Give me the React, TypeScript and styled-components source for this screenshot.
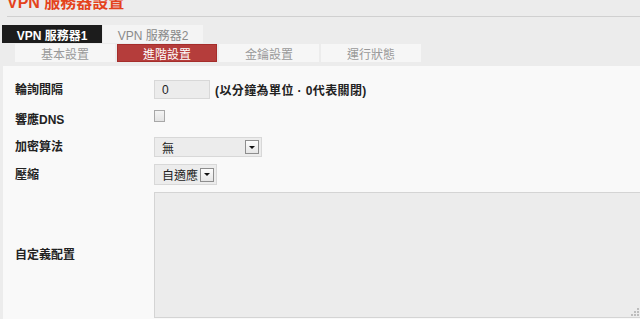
import styled, { createGlobalStyle } from "styled-components";

const GlobalStyle = createGlobalStyle`
  html, body {
    margin: 0;
    padding: 0;
    background: #ececec;
    overflow: hidden;
  }
  body {
    font-family: "Liberation Sans", "Noto Sans CJK TC", sans-serif;
    font-size: 12px;
    color: #222;
  }
`;

const Page = styled.div`
  width: 640px;
  height: 319px;
  overflow: hidden;
`;

const Header = styled.div`
  margin-left: 7px;
  height: 16px;
  border-bottom: 1px solid #d0d0d0;
  overflow: hidden;
`;

const Title = styled.h1`
  margin: -5px 0 0 0;
  font-size: 16px;
  line-height: 16px;
  font-weight: bold;
  color: #e4431c;
`;

const ServerTabs = styled.div`
  display: flex;
  margin: 8px 0 0 2px;
  gap: 1px;
`;

const ServerTab = styled.div<{ $active?: boolean }>`
  width: 100px;
  height: 18px;
  display: flex;
  align-items: center;
  justify-content: center;
  font-size: 12px;
  font-weight: ${(p) => (p.$active ? "bold" : "normal")};
  color: ${(p) => (p.$active ? "#fff" : "#8a8a8a")};
  background: ${(p) => (p.$active ? "#1c1c1c" : "#f4f4f4")};
`;

const SubTabs = styled.div`
  display: flex;
  margin: 1px 0 0 15px;
  gap: 2px;
`;

const SubTab = styled.div<{ $active?: boolean }>`
  box-sizing: border-box;
  width: 100px;
  height: 18px;
  display: flex;
  align-items: center;
  justify-content: center;
  font-size: 12px;
  color: ${(p) => (p.$active ? "#fff" : "#999")};
  background: ${(p) => (p.$active ? "#b53d3b" : "#f6f6f6")};
  border: 1px solid ${(p) => (p.$active ? "#a52d2b" : "#f6f6f6")};
`;

const Panel = styled.div`
  margin: 4px 0 0 3px;
  background: #f9f9f9;
  padding-top: 14px;
  height: 240px;
`;

const Row = styled.div<{ $top?: number; $align?: string; $h?: number }>`
  display: flex;
  align-items: ${(p) => p.$align || "center"};
  margin-top: ${(p) => p.$top || 0}px;
  height: ${(p) => (p.$h ? `${p.$h}px` : "auto")};
`;

const Label = styled.div<{ $pad?: number }>`
  flex-shrink: 0;
  width: 139px;
  padding-left: 12px;
  padding-top: ${(p) => p.$pad || 0}px;
  font-weight: bold;
  font-size: 12px;
  line-height: 16px;
  color: #222;
`;

const TextInput = styled.div`
  box-sizing: border-box;
  width: 56px;
  height: 19px;
  padding-left: 7px;
  display: flex;
  align-items: center;
  background: #ececec;
  border: 1px solid #d8d8d8;
  color: #222;
`;

const Hint = styled.span`
  margin-left: 5px;
  font-weight: bold;
  letter-spacing: 0.4px;
`;

const Checkbox = styled.div`
  box-sizing: border-box;
  width: 11px;
  height: 12px;
  margin-top: 1px;
  background: linear-gradient(#f4f4f4, #e4e4e4);
  border: 1px solid #a8a8a8;
`;

const Select = styled.div<{ $w: number; $h: number }>`
  box-sizing: border-box;
  width: ${(p) => p.$w}px;
  height: ${(p) => p.$h}px;
  padding: 0 2px 0 7px;
  display: flex;
  align-items: center;
  justify-content: space-between;
  background: #ececec;
  border: 1px solid #d8d8d8;
  color: #222;
`;

const Arrow = styled.div`
  box-sizing: border-box;
  width: 14px;
  height: 14px;
  display: flex;
  align-items: center;
  justify-content: center;
  background: linear-gradient(#fdfdfd, #e6e6e6);
  border: 1px solid #8e8e8e;
  &::after {
    content: "";
    border-left: 3px solid transparent;
    border-right: 3px solid transparent;
    border-top: 3px solid #111;
  }
`;

const TextArea = styled.div`
  flex-shrink: 0;
  box-sizing: border-box;
  width: 490px;
  height: 126px;
  background: #ececec;
  border: 1px solid #d4d4d4;
  position: relative;
`;

const Grip = styled.svg`
  position: absolute;
  right: 4px;
  bottom: 1px;
`;

export default function App() {
  return (
    <Page>
      <GlobalStyle />
      <Header>
        <Title>VPN 服務器設置</Title>
      </Header>
      <ServerTabs>
        <ServerTab $active>VPN 服務器1</ServerTab>
        <ServerTab>VPN 服務器2</ServerTab>
      </ServerTabs>
      <SubTabs>
        <SubTab>基本設置</SubTab>
        <SubTab $active>進階設置</SubTab>
        <SubTab>金鑰設置</SubTab>
        <SubTab>運行狀態</SubTab>
      </SubTabs>
      <Panel>
        <Row>
          <Label>輪詢間隔</Label>
          <TextInput>0</TextInput>
          <Hint>(以分鐘為單位 · 0代表關閉)</Hint>
        </Row>
        <Row $top={10} $align="flex-start" $h={13}>
          <Label $pad={3}>響應DNS</Label>
          <Checkbox />
        </Row>
        <Row $top={15}>
          <Label>加密算法</Label>
          <Select $w={108} $h={20}>
            無<Arrow />
          </Select>
        </Row>
        <Row $top={7}>
          <Label>壓縮</Label>
          <Select $w={63} $h={21}>
            自適應<Arrow />
          </Select>
        </Row>
        <Row $top={7}>
          <Label>自定義配置</Label>
          <TextArea>
            <Grip width="9" height="9" viewBox="0 0 9 9">
              <g fill="#bdbdbd">
                <rect x="7" y="1" width="2" height="2" />
                <rect x="4" y="4" width="2" height="2" />
                <rect x="7" y="4" width="2" height="2" />
                <rect x="1" y="7" width="2" height="2" />
                <rect x="4" y="7" width="2" height="2" />
                <rect x="7" y="7" width="2" height="2" />
              </g>
            </Grip>
          </TextArea>
        </Row>
      </Panel>
    </Page>
  );
}
